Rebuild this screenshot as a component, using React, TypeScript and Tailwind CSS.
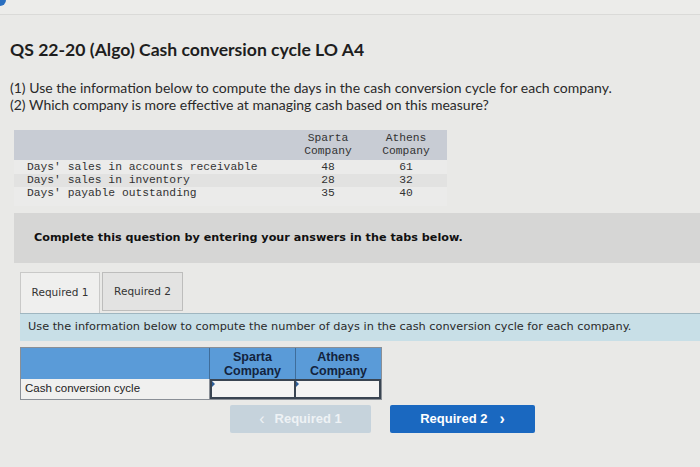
import React from 'react';

const rows = [
    { label: "Days' sales in accounts receivable", sparta: 48, athens: 61 },
    { label: "Days' sales in inventory", sparta: 28, athens: 32 },
    { label: "Days' payable outstanding", sparta: 35, athens: 40 },
];

export default function App() {
    return (
        <div className="w-[700px] h-[467px] overflow-hidden bg-[#e9e9e7] text-[#222]" style={{ fontFamily: 'Lato, "Open Sans", sans-serif' }}>
            {/* top strip */}
            <div className="relative h-[15px] border-b border-[#dadad8] bg-[#ececea]">
                <div className="absolute -left-[6px] -top-[6px] w-[12px] h-[12px] rounded-full bg-[#2a6fc0]" />
            </div>

            <div className="pl-[10px]">
                <h1 className="mt-[25px] text-[17.6px] leading-[20px] font-bold text-[#1e1e1e]">
                    QS 22-20 (Algo) Cash conversion cycle LO A4
                </h1>
                <div className="mt-[19px] text-[14px] leading-[17px] text-[#2a2a2a]">
                    <p>(1) Use the information below to compute the days in the cash conversion cycle for each company.</p>
                    <p>(2) Which company is more effective at managing cash based on this measure?</p>
                </div>
            </div>

            {/* given data */}
            <div className="ml-[14px] mt-[17px] w-[433px] text-[11.3px] text-[#333]" style={{ fontFamily: '"Liberation Mono", monospace' }}>
                <div className="flex h-[30px] bg-[#c8ccd4] leading-[13px] items-center">
                    <div className="flex-1" />
                    <div className="w-[78px] text-center">Sparta<br />Company</div>
                    <div className="w-[78px] text-center mr-[2px]">Athens<br />Company</div>
                </div>
                <div className="pt-[1px] pb-[6px] bg-[#ebebea]">
                    {rows.map((r, i) => (
                        <div key={i} className={`flex h-[13px] leading-[13px] ${i === 1 ? 'bg-[#e2e2e1]' : ''}`}>
                            <div className="flex-1 pl-[13px]">{r.label}</div>
                            <div className="w-[78px] text-center">{r.sparta}</div>
                            <div className="w-[78px] text-center mr-[2px]">{r.athens}</div>
                        </div>
                    ))}
                </div>
            </div>

            {/* instructions band */}
            <div className="ml-[14px] mt-[7px] h-[50px] bg-[#d6d6d5] flex items-center pl-[20px]">
                <span className="text-[11.2px] font-bold text-[#111]" style={{ fontFamily: '"DejaVu Sans", Verdana, sans-serif' }}>
                    Complete this question by entering your answers in the tabs below.
                </span>
            </div>

            {/* tabs */}
            <div className="ml-[20px] mt-[9px]" style={{ fontFamily: '"DejaVu Sans", Verdana, sans-serif' }}>
                <div className="flex gap-[2px] items-end">
                    <div className="w-[80px] h-[41px] bg-[#efefee] border border-b-0 border-[#c9c9c8] flex items-center justify-center text-[10.5px] text-[#333]">
                        Required 1
                    </div>
                    <div className="w-[81px] h-[39px] mb-[2px] bg-[#e3e3e2] border border-[#bdbdbc] flex items-center justify-center text-[10.5px] text-[#333]">
                        Required 2
                    </div>
                </div>
                <div className="h-[28px] bg-[#c8dfe7] border-t border-[#9fb6c0] flex items-center pl-[8px] text-[11.3px] text-[#2a2a2a]">
                    Use the information below to compute the number of days in the cash conversion cycle for each company.
                </div>

                {/* answer table */}
                <div className="mt-[6px] w-[362px] border border-[#8a8f96]" style={{ fontFamily: '"Liberation Sans", Arial, sans-serif' }}>
                    <div className="flex h-[31px] bg-[#5a9bd8]">
                        <div className="w-[189px] border-r border-[#3f6d9a]" />
                        <div className="w-[86px] border-r border-[#3f6d9a] flex items-center justify-center text-center text-[12.5px] leading-[14px] font-bold text-[#13233d]">
                            Sparta<br />Company
                        </div>
                        <div className="flex-1 flex items-center justify-center text-center text-[12.5px] leading-[14px] font-bold text-[#13233d]">
                            Athens<br />Company
                        </div>
                    </div>
                    <div className="flex h-[20px] bg-[#f0f0ef]">
                        <div className="w-[189px] border-r border-[#8a8f96] flex items-center pl-[4px] text-[11.5px] text-[#222]">
                            Cash conversion cycle
                        </div>
                        <div className="relative w-[86px] border-2 border-[#3a4552] bg-[#f4f4f3]">
                            <div className="absolute left-0 top-0 w-0 h-0 border-t-[3px] border-b-[3px] border-l-[3px] border-t-transparent border-b-transparent border-l-[#2d5f99]" />
                        </div>
                        <div className="relative flex-1 border-2 border-l-0 border-[#3a4552] bg-[#f4f4f3]">
                            <div className="absolute left-0 top-0 w-0 h-0 border-t-[3px] border-b-[3px] border-l-[3px] border-t-transparent border-b-transparent border-l-[#2d5f99]" />
                        </div>
                    </div>
                </div>
            </div>

            {/* nav buttons */}
            <div className="flex mt-[5px] ml-[230px] gap-[19px]" style={{ fontFamily: '"Liberation Sans", Arial, sans-serif' }}>
                <div className="w-[141px] h-[28px] bg-[#c6d3dc] rounded-[2px] flex items-center justify-center gap-[10px] text-[13px] font-bold text-[#eef2f5]">
                    <span className="text-[16px] font-normal leading-none">&lsaquo;</span>
                    <span>Required 1</span>
                </div>
                <div className="w-[145px] h-[28px] bg-[#1a68c0] rounded-[2px] flex items-center justify-center gap-[12px] text-[13px] font-bold text-white">
                    <span>Required 2</span>
                    <span className="text-[16px] leading-none">&rsaquo;</span>
                </div>
            </div>
        </div>
    );
}
